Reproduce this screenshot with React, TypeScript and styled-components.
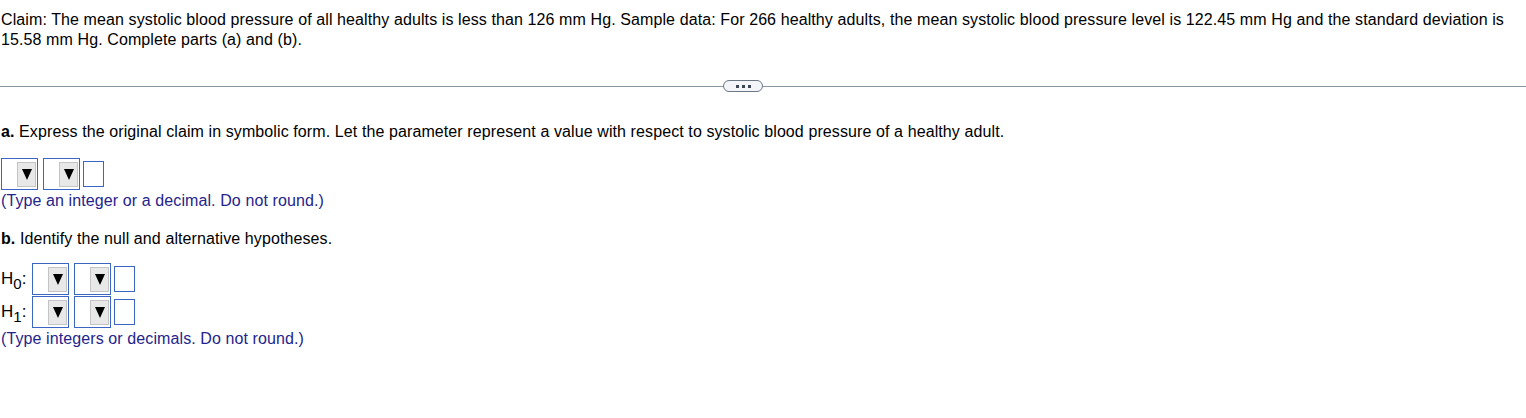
import React from "react";
import styled, { createGlobalStyle } from "styled-components";

const Global = createGlobalStyle`
  html, body { margin: 0; padding: 0; background: #fff; }
  body { font-family: "Liberation Sans", Arial, sans-serif; font-size: 16px; line-height: 20px; letter-spacing: 0.1px; color: #000; }
`;

const Page = styled.div`
  padding: 10px 0 0 1px;
`;

const Para = styled.p<{ $mt?: number; $navy?: boolean; $lh?: number }>`
  margin: ${(p) => p.$mt ?? 0}px 0 0 0;
  line-height: ${(p) => p.$lh ?? 20}px;
  color: ${(p) => (p.$navy ? "#24248c" : "#000")};
`;

const Sep = styled.div`
  display: flex;
  align-items: center;
  margin: 30px 0 0 -1px;
  height: 12px;
`;

const Line = styled.div<{ $basis?: number }>`
  height: 1px;
  background: #8a95a2;
  flex: ${(p) => (p.$basis ? `0 0 ${p.$basis}px` : "1 1 auto")};
`;

const More = styled.button`
  width: 40px;
  height: 12px;
  box-sizing: border-box;
  border: 1px solid #6b7785;
  border-radius: 6px;
  background: #f3f5f8;
  padding: 0;
  display: flex;
  align-items: center;
  justify-content: center;
  gap: 3px;
`;

const Dot = styled.span`
  width: 3px;
  height: 3px;
  background: #3d4652;
  display: block;
`;

const Row = styled.div<{ $mt?: number }>`
  display: flex;
  align-items: center;
  margin-top: ${(p) => p.$mt ?? 0}px;
  height: 32px;
`;

const Label = styled.span`
  width: 31px;
  flex: 0 0 31px;
  font-size: 17px;
  line-height: 22px;
  letter-spacing: 0;
`;

const Sub = styled.sub`
  font-size: 15px;
  vertical-align: -5px;
  line-height: 0;
`;

const Select = styled.div<{ $mr: number }>`
  box-sizing: border-box;
  width: 37px;
  height: 32px;
  border: 1px solid #3b66c6;
  margin-right: ${(p) => p.$mr}px;
  display: flex;
  justify-content: flex-end;
  align-items: center;
  padding-right: 1px;
`;

const Arrow = styled.div`
  box-sizing: border-box;
  width: 19px;
  height: 25px;
  background: #e8e8e8;
  border: 1px solid #c4c4c4;
  display: flex;
  align-items: center;
  justify-content: center;
`;

const Tri = styled.div`
  width: 0;
  height: 0;
  border-left: 5px solid transparent;
  border-right: 5px solid transparent;
  border-top: 11px solid #000;
`;

const Input = styled.div`
  box-sizing: border-box;
  width: 21px;
  height: 26px;
  border: 1px solid #3b66c6;
`;

const Dropdown = ({ mr }: { mr: number }) => (
  <Select $mr={mr}>
    <Arrow>
      <Tri />
    </Arrow>
  </Select>
);

const Answer = () => (
  <>
    <Dropdown mr={5} />
    <Dropdown mr={3} />
    <Input />
  </>
);

export default function App() {
  return (
    <Page>
      <Global />
      <Para>
        Claim: The mean systolic blood pressure of all healthy adults is less than 126 mm Hg. Sample data: For 266 healthy
        adults, the mean systolic blood pressure level is 122.45 mm Hg and the standard deviation is 15.58 mm Hg. Complete
        parts (a) and (b).
      </Para>
      <Sep>
        <Line $basis={723} />
        <More aria-label="more">
          <Dot />
          <Dot />
          <Dot />
        </More>
        <Line />
      </Sep>
      <Para $mt={29} $lh={22}>
        <b>a.</b> Express the original claim in symbolic form. Let the parameter represent a value with respect to systolic
        blood pressure of a healthy adult.
      </Para>
      <Row $mt={15}>
        <Answer />
      </Row>
      <Para $navy $lh={22}>(Type an integer or a decimal. Do not round.)</Para>
      <Para $mt={16} $lh={22}>
        <b>b.</b> Identify the null and alternative hypotheses.
      </Para>
      <Row $mt={13}>
        <Label>
          H<Sub>0</Sub>:
        </Label>
        <Answer />
      </Row>
      <Row $mt={1}>
        <Label>
          H<Sub>1</Sub>:
        </Label>
        <Answer />
      </Row>
      <Para $navy $lh={22}>(Type integers or decimals. Do not round.)</Para>
    </Page>
  );
}
